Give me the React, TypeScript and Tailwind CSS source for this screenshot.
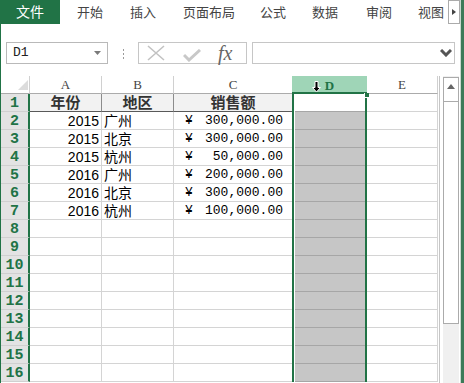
import React from "react"

const data = [
  { year: "2015", city: "广州", amount: "300,000.00" },
  { year: "2015", city: "北京", amount: "300,000.00" },
  { year: "2015", city: "杭州", amount: "50,000.00" },
  { year: "2016", city: "广州", amount: "200,000.00" },
  { year: "2016", city: "北京", amount: "300,000.00" },
  { year: "2016", city: "杭州", amount: "100,000.00" },
]

const tabs = [
  { label: "开始", ml: "ml-[17px]" },
  { label: "插入", ml: "ml-[27px]" },
  { label: "页面布局", ml: "ml-[27px]" },
  { label: "公式", ml: "ml-[25px]" },
  { label: "数据", ml: "ml-[26px]" },
  { label: "审阅", ml: "ml-[28px]" },
  { label: "视图", ml: "ml-[26px]" },
]

function TabBar() {
  return (
    <div className="flex h-[24px] items-center font-['Liberation_Sans','Noto_Sans_CJK_SC',sans-serif] text-[13px] leading-none text-[#444]">
      <div className="flex h-full w-[60px] shrink-0 items-center justify-center bg-[#217346] text-[14px] text-white">文件</div>
      {tabs.map((t) => (
        <span key={t.label} className={`${t.ml} shrink-0 whitespace-nowrap`}>
          {t.label}
        </span>
      ))}
      <div className="ml-[4px] flex h-[24px] w-[12px] shrink-0 items-center justify-center border border-[#ababab] bg-white">
        <svg width="4" height="6" viewBox="0 0 4 6">
          <path d="M0 0 L4 3 L0 6 Z" fill="#444" />
        </svg>
      </div>
    </div>
  )
}

function FormulaBar() {
  return (
    <div className="flex h-[52px] items-start pl-[5px] pt-[18px]">
      <div className="flex h-[22px] w-[102px] items-center justify-between border border-[#b9b9b9] pl-[6px] pr-[6px] font-['Liberation_Mono',monospace] text-[13px] text-[#222]">
        <span>D1</span>
        <svg width="7" height="4" viewBox="0 0 7 4">
          <path d="M0 0 H7 L3.5 4 Z" fill="#7a7a7a" />
        </svg>
      </div>
      <div className="ml-[15px] mt-[7px] flex w-px flex-col gap-[2px]">
        <div className="h-[2px] w-px bg-[#9a9a9a]" />
        <div className="h-[2px] w-px bg-[#9a9a9a]" />
        <div className="h-[2px] w-px bg-[#9a9a9a]" />
      </div>
      <div className="ml-[14px] flex h-[22px] w-[109px] items-center border border-[#c6c6c6]">
        <svg className="ml-[8px]" width="18" height="16" viewBox="0 0 18 16">
          <path d="M1 1 L17 15 M17 1 L1 15" stroke="#c2c2c2" strokeWidth="1.6" fill="none" />
        </svg>
        <svg className="ml-[18px] mt-[4px]" width="18" height="13" viewBox="0 0 18 13">
          <path d="M1 6 L6 11 L17 1" stroke="#c8c8c8" strokeWidth="3" fill="none" />
        </svg>
        <span className="ml-[17px] font-['Liberation_Serif',serif] text-[20px] italic leading-none text-[#666]">fx</span>
      </div>
      <div className="ml-[5px] flex h-[22px] w-[203px] items-center justify-end border border-[#c6c6c6] pr-[2px]">
        <svg width="12" height="8" viewBox="0 0 12 8">
          <path d="M1 1 L6 6 L11 1" stroke="#555" strokeWidth="3" fill="none" />
        </svg>
      </div>
    </div>
  )
}

function HeaderRow() {
  return (
    <div className="flex h-[18px] font-['Liberation_Serif',serif] text-[13px] leading-none text-[#444]">
      <div className="relative w-[29px] border-b border-r border-b-[#ababab] border-r-[#d0d0d0]">
        <svg className="absolute left-[17px] top-[4px]" width="10" height="10" viewBox="0 0 10 10">
          <path d="M10 0 V10 H0 Z" fill="#dcdcdc" />
        </svg>
      </div>
      <div className="flex w-[72px] items-center justify-center border-b border-r border-b-[#ababab] border-r-[#d0d0d0]">A</div>
      <div className="flex w-[72px] items-center justify-center border-b border-r border-b-[#ababab] border-r-[#d0d0d0]">B</div>
      <div className="flex w-[118px] items-center justify-center border-b border-b-[#ababab]">C</div>
      <div className="relative flex w-[75px] items-center justify-center border-b-2 border-b-[#217346] bg-[#9fd5b7] pt-[2px] font-bold text-[#217346]">
        D
        <svg className="absolute left-[20px] top-[5px]" width="9" height="12" viewBox="0 0 9 12">
          <path d="M3 0.5 H6 V6.5 H8.5 L4.5 11 L0.5 6.5 H3 Z" fill="#000" stroke="#fff" strokeWidth="1" />
        </svg>
      </div>
      <div className="flex w-[71px] items-center justify-center border-b border-r border-b-[#ababab] border-r-[#d0d0d0]">E</div>
    </div>
  )
}

function Row({ n }: { n: number }) {
  const item = n >= 2 && n <= 7 ? data[n - 2] : null
  const head = n === 1
  return (
    <div className="flex h-[18px] leading-none">
      <div className="flex w-[29px] items-center justify-center border-b border-r-2 border-b-[#d0d0d0] border-r-[#217346] bg-[#e3e3e3] pt-px font-['Liberation_Mono',monospace] text-[15px] font-bold text-[#217346]">
        {n}
      </div>
      {head ? (
        <>
          <div className="flex w-[72px] items-center justify-center border-b border-r border-b-[#595959] border-r-[#8c8c8c] bg-[#f2f2f2] font-['Liberation_Sans','Noto_Sans_CJK_SC',sans-serif] text-[15px] font-bold text-[#333]">年份</div>
          <div className="flex w-[72px] items-center justify-center border-b border-r border-b-[#595959] border-r-[#8c8c8c] bg-[#f2f2f2] font-['Liberation_Sans','Noto_Sans_CJK_SC',sans-serif] text-[15px] font-bold text-[#333]">地区</div>
          <div className="flex w-[118px] items-center justify-center border-b border-b-[#595959] bg-[#f2f2f2] font-['Liberation_Sans','Noto_Sans_CJK_SC',sans-serif] text-[15px] font-bold text-[#333]">销售额</div>
        </>
      ) : (
        <>
          <div className="flex w-[72px] items-center justify-end border-b border-r border-[#d4d4d4] pr-[2px] font-['Liberation_Sans',sans-serif] text-[14px] text-black">
            {item?.year}
          </div>
          <div className="flex w-[72px] items-center border-b border-r border-[#d4d4d4] pl-[2px] font-['Liberation_Sans','Noto_Sans_CJK_SC',sans-serif] text-[14px] text-black">
            {item?.city}
          </div>
          <div className="flex w-[118px] items-center justify-between border-b border-[#d4d4d4] pl-[11px] pr-[9px] font-['Liberation_Mono',monospace] text-[13px] text-black">
            {item && (
              <>
                <span>¥</span>
                <span>{item.amount}</span>
              </>
            )}
          </div>
        </>
      )}
      <div className="flex w-[75px] border-x-2 border-[#217346] pl-px">
        {head ? (
          <div className="h-full w-full border-b border-[#a6a6a6] bg-white" />
        ) : (
          <div className="h-full w-full border-b border-[#a6a6a6] bg-[#c6c6c6]" />
        )}
      </div>
      <div className="w-[71px] border-b border-r border-[#d4d4d4]" />
    </div>
  )
}

function Scrollbar() {
  return (
    <div className="flex w-[16px] flex-col bg-[#f0f0f0] pt-px">
      <div className="flex h-[25px] items-start justify-center border border-[#ababab] bg-white pt-[6px]">
        <svg width="8" height="5" viewBox="0 0 8 5">
          <path d="M0 5 L4 0 L8 5 Z" fill="#666" />
        </svg>
      </div>
      <div className="h-[222px] border border-t-0 border-[#ababab] bg-white" />
    </div>
  )
}

export default function App() {
  const rowNums = Array.from({ length: 16 }, (_, i) => i + 1)
  return (
    <div className="flex h-[383px] w-[464px] overflow-hidden bg-white">
      <div className="flex w-[460px] flex-col">
        <TabBar />
        <div className="flex flex-1 flex-col border-l border-[#217346]">
          <FormulaBar />
          <div className="relative flex flex-1">
            <div className="flex w-[437px] flex-col">
              <HeaderRow />
              {rowNums.map((n) => (
                <Row key={n} n={n} />
              ))}
            </div>
            <div className="flex w-[5px]">
              <div className="w-px bg-white" />
              <div className="w-px bg-[#c6c6c6]" />
            </div>
            <Scrollbar />
            <div className="absolute left-[363px] top-[17px] h-[5px] w-[5px] border-b border-l border-white bg-[#217346]" />
          </div>
        </div>
      </div>
      <div className="w-[4px] border-l border-[#c8d8ce] bg-[#3c7a58]" />
    </div>
  )
}
